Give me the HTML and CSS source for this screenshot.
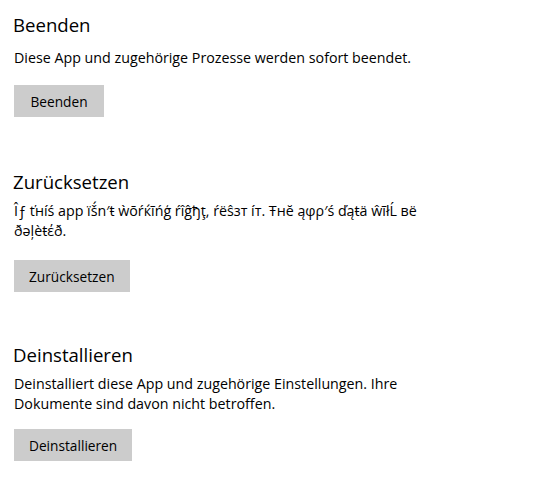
FILE: index.html
```html
<!DOCTYPE html>
<html lang="de">
<head>
<meta charset="utf-8">
<link rel="stylesheet" href="styles.css">
</head>
<body>
<main class="page">
  <section class="group group-first">
    <h2 class="title">Beenden</h2>
    <p class="desc">Diese App und zugehörige Prozesse werden sofort beendet.</p>
    <button class="btn" type="button">Beenden</button>
  </section>
  <section class="group group-reset">
    <h2 class="title">Zurücksetzen</h2>
    <p class="desc">Îƒ ťнíś app ïš́n′ŧ ẁōŕќĩńģ ŕîĝђţ, ŕëŝзт íт. Ŧнĕ ąφρ′ś ďąŧä ŵĩłĹ вё<br>ðəļèŧέð.</p>
    <button class="btn" type="button">Zurücksetzen</button>
  </section>
  <section class="group group-last">
    <h2 class="title">Deinstallieren</h2>
    <p class="desc">Deinstalliert diese App und zugehörige Einstellungen. Ihre<br>Dokumente sind davon nicht betroffen.</p>
    <button class="btn" type="button">Deinstallieren</button>
  </section>
</main>
</body>
</html>
```

FILE: styles.css
```css
html, body {
  margin: 0;
  padding: 0;
  background: #ffffff;
}

body {
  font-family: "Open Sans", "Noto Sans", "DejaVu Sans", sans-serif;
  color: #000000;
}

.page {
  padding: 12px 0 0 13px;
  display: flex;
  flex-direction: column;
}

.group {
  display: flex;
  flex-direction: column;
  align-items: flex-start;
}

.group-reset {
  margin-top: 52px;
}

.group-last {
  margin-top: 50px;
}

.title {
  margin: 0;
  font-size: 18.6px;
  font-weight: 400;
  line-height: 26px;
}

.desc {
  margin: 6px 0 0 1px;
  font-size: 14.25px;
  line-height: 20px;
  white-space: nowrap;
}

.group-first .desc {
  margin-top: 10px;
}

.btn {
  margin: 19px 0 0 1px;
  height: 32px;
  min-width: 90px;
  padding: 0 15px;
  border: 0;
  border-radius: 0;
  background: #cccccc;
  color: #000000;
  font-family: inherit;
  font-size: 13.7px;
}

.group-first .btn {
  margin-top: 17px;
}

.group-last .btn {
  margin-top: 15px;
}
```
